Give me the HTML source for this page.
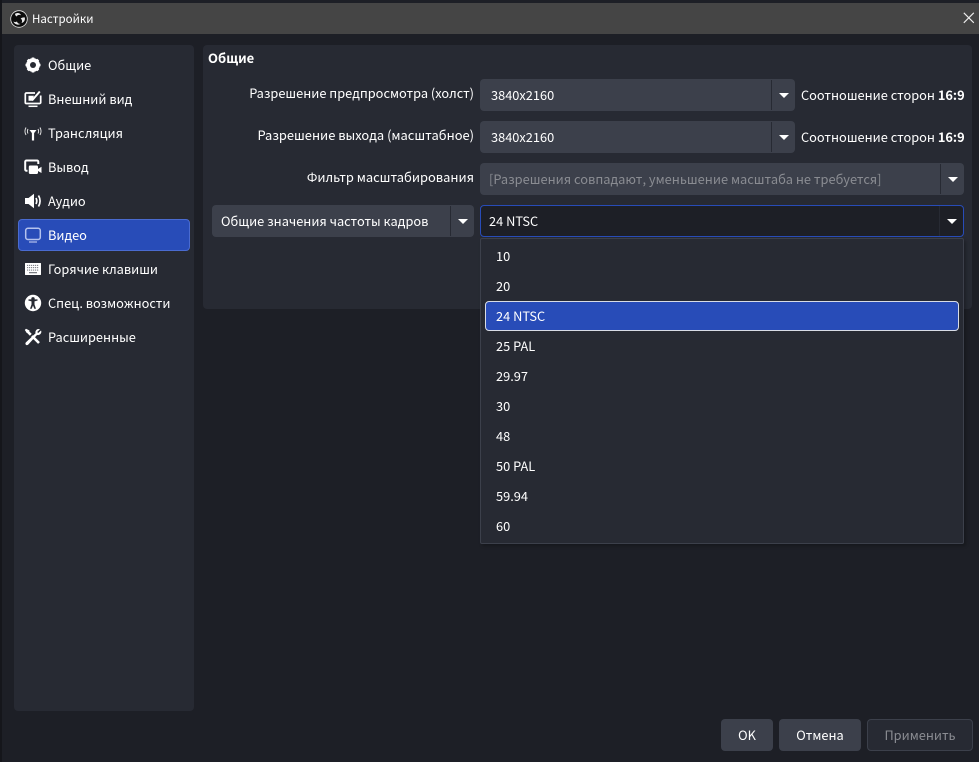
<!DOCTYPE html>
<html><head><meta charset="utf-8"><style>
*{box-sizing:border-box}
html,body{margin:0;padding:0}
body{width:979px;height:762px;overflow:hidden;background:#1d1f26;position:relative;font-family:"Noto Sans CJK SC","DejaVu Sans",sans-serif;font-size:12.8px;color:#fff}
.a{position:absolute}
.t{position:absolute;white-space:nowrap;line-height:18px;height:18px}
.panel{position:absolute;background:#272a33;border-radius:4px}
.c{position:absolute;height:32px;background:#3c404b;border-radius:4px}
.c .s{position:absolute;right:23px;top:1px;bottom:1px;width:1px;background:#272a33}
.c .r{position:absolute;right:6px;top:14px;width:0;height:0;border-left:5px solid transparent;border-right:5px solid transparent;border-top:5px solid #fff}
.ic{position:absolute;left:24px;width:18px;height:18px;overflow:visible}
.b{position:absolute;top:719px;height:32px;background:#3c404b;border-radius:4px;text-align:center;line-height:32px}
</style></head><body>
<div class="a" style="left:0;top:0;width:2px;height:762px;background:#15161b"></div>
<div class="a" style="left:2px;top:3px;width:977px;height:31px;background:#454545"></div>
<svg class="a" style="left:10px;top:10px" width="18" height="18" viewBox="0 0 18 18"><circle cx="9" cy="9" r="8.300" fill="#0c0c0c" stroke="#e8e8e8" stroke-width=".8"/><path d="M5 3.800c2.600-1.500 5.400-.8 6 1.500-1.700-.8-3.600-.4-4.300 1.200C5.700 6.100 5 5 5 3.800zM14.800 7.500c.6 2.800-.9 5-3.300 5.500 1-1.600.7-3.500-.9-4.500C12 7.700 13.500 7.200 14.800 7.500zM3.400 11.500c1.100.7 2.400.8 3.600 0 .3 1.700 1.900 2.600 3.600 2.400-2.700 1.600-5.900.5-7.200-2.400z" fill="#e8e8e8"/></svg>
<div class="t" style="left:32px;top:10px;font-size:11.500px">Настройки</div>
<svg class="a" style="left:963px;top:12px" width="12" height="12" viewBox="0 0 12 12"><path d="M.8.800l10 10M10.800.800l-10 10" stroke="#eee" stroke-width="1.100"/></svg>

<div class="panel" style="left:14px;top:45px;width:180px;height:666px"></div>
<div class="a" style="left:18px;top:219px;width:172px;height:32px;background:#284cb8;border:1px solid #4a6bd0;border-radius:4px"></div>

<svg class="ic" style="top:56px" viewBox="0 0 18 18"><circle cx="9" cy="9" r="5" fill="none" stroke="#fff" stroke-width="3.800"/><path d="M9 1.500v15M1.500 9h15M3.700 3.700l10.600 10.600M14.300 3.700L3.700 14.300" stroke="#fff" stroke-width="2.600"/><circle cx="9" cy="9" r="3" fill="#272a33"/></svg>
<svg class="ic" style="top:90px" viewBox="0 0 18 18"><path d="M11 3H2.300a1 1 0 0 0-1 1v8.500a1 1 0 0 0 1 1h13.400a1 1 0 0 0 1-1V5.500" fill="none" stroke="#fff" stroke-width="1.700"/><path d="M4.500 5.800h5.500L8 10.800H4.500z" fill="#fff"/><path d="M8 10.500L15.800 1.500" stroke="#fff" stroke-width="2"/><path d="M4.500 16.300h9" stroke="#fff" stroke-width="1.500"/></svg>
<svg class="ic" style="top:124px" viewBox="0 0 18 18"><path d="M9 7v9.500" stroke="#fff" stroke-width="2.200"/><path d="M5.500 6h7L9 10.500z" fill="#fff"/><path d="M4 5C3.200 6.500 3.200 8 4 9.500M14 5c.8 1.500.8 3 0 4.500M2 3.500C.6 6 .6 8.500 2 11M16 3.500c1.400 2.500 1.400 5 0 7.500" fill="none" stroke="#e4e4e4" stroke-width="1"/></svg>
<svg class="ic" style="top:158px" viewBox="0 0 18 18"><path d="M3.500 12.800H2.500A1.300 1.300 0 0 1 1.200 11.500V3.800a1.300 1.300 0 0 1 1.300-1.300H13a1.300 1.300 0 0 1 1.300 1.300V6" fill="none" stroke="#fff" stroke-width="2"/><rect x="4.800" y="7.500" width="9.200" height="8.500" rx="1.200" fill="#fff"/><path d="M14 11l3.500-2.200v6.200L14 13z" fill="#fff"/></svg>
<svg class="ic" style="top:192px" viewBox="0 0 18 18"><path d="M1 6h3.500L10 1.800v14.400L4.500 12H1z" fill="#fff"/><path d="M12 6c1 1.900 1 4 0 6M14.500 3.500c2 3.500 2 7.500 0 11" fill="none" stroke="#fff" stroke-width="1.700"/></svg>
<svg class="ic" style="top:226px" viewBox="0 0 18 18"><rect x="1.700" y="2.200" width="14.600" height="11.300" rx="2.200" fill="none" stroke="#b4c2ee" stroke-width="1.500"/><path d="M5 16h8" stroke="#b4c2ee" stroke-width="1.200"/></svg>
<svg class="ic" style="top:260px" viewBox="0 0 18 18"><rect x="1" y="3" width="16" height="12" rx=".5" fill="#fff"/><path d="M3 5.300h12M3 7.700h12M3 10.100h12" stroke="#5a5d66" stroke-width=".9" stroke-dasharray="1.200 .8"/><path d="M5 12.700h8" stroke="#5a5d66" stroke-width="1"/></svg>
<svg class="ic" style="top:294px" viewBox="0 0 18 18"><circle cx="9" cy="9" r="8.200" fill="#fff"/><circle cx="9" cy="4.800" r="1.700" fill="#272a33"/><path d="M4.300 6.500l3.200.9v3.100L6 14.700h1.700L9 11.500l1.300 3.200H12l-1.500-4.200V7.400l3.200-.9-.3-1.100H4.600z" fill="#272a33"/></svg>
<svg class="ic" style="top:328px" viewBox="0 0 18 18"><path d="M2.800 2.800l4 4M8 8l7 7" stroke="#fff" stroke-width="2.600"/><path d="M2 .8L.8 2l2 3 2.200-.5.500-2z" fill="#fff"/><path d="M17 2.500l-2.800 2.500-1-1L16 1.300C14 .5 12 1.500 11.500 3.500c-.2.700-.1 1.300.1 1.800L2 14.300c-.8.800-.8 1.700-.1 2.400s1.600.6 2.300-.1L13 7c2 .4 4-.8 4.300-2.800.1-.6 0-1.200-.3-1.700z" fill="#fff"/></svg>

<div class="t" style="left:48px;top:56px">Общие</div>
<div class="t" style="left:48px;top:90px">Внешний вид</div>
<div class="t" style="left:48px;top:124px">Трансляция</div>
<div class="t" style="left:48px;top:158px">Вывод</div>
<div class="t" style="left:48px;top:192px">Аудио</div>
<div class="t" style="left:48px;top:226px">Видео</div>
<div class="t" style="left:48px;top:260px">Горячие клавиши</div>
<div class="t" style="left:48px;top:294px">Спец. возможности</div>
<div class="t" style="left:48px;top:328px">Расширенные</div>

<div class="panel" style="left:203px;top:45px;width:769px;height:264px"></div>
<div class="t" style="left:208px;top:49px;font-weight:700;font-size:13px">Общие</div>
<div class="t" style="right:505px;top:84px">Разрешение предпросмотра (холст)</div>
<div class="t" style="right:505px;top:126px;font-size:12.900px">Разрешение выхода (масштабное)</div>
<div class="t" style="right:505px;top:168px;font-size:12.900px">Фильтр масштабирования</div>

<div class="c" style="left:480px;top:79px;width:315px"><i class="s"></i><i class="r"></i></div>
<div class="t" style="left:491px;top:86px">3840x2160</div>
<div class="c" style="left:480px;top:121px;width:315px"><i class="s"></i><i class="r"></i></div>
<div class="t" style="left:491px;top:128px">3840x2160</div>
<div class="t" style="left:801px;top:86px">Соотношение сторон <b>16:9</b></div>
<div class="t" style="left:801px;top:128px">Соотношение сторон <b>16:9</b></div>
<div class="c" style="left:480px;top:163px;width:484px"><i class="s"></i><i class="r"></i></div>
<div class="t" style="left:489px;top:170px;color:#8a8c92;font-size:12.850px">[Разрешения совпадают, уменьшение масштаба не требуется]</div>
<div class="c" style="left:212px;top:205px;width:262px"><i class="s"></i><i class="r"></i></div>
<div class="t" style="left:221px;top:212px">Общие значения частоты кадров</div>
<div class="c" style="left:480px;top:205px;width:484px;background:#1d1f26;border:1px solid #284cb8"><i class="s" style="right:23px;top:0;bottom:0"></i><i class="r" style="right:6px;top:13px"></i></div>
<div class="t" style="left:489px;top:212px">24 NTSC</div>

<div class="a" style="left:480px;top:238px;width:484px;height:306px;background:#272a33;border:1px solid #3c404b;border-radius:2px;box-shadow:2px 2px 3px rgba(0,0,0,.25)"></div>
<div class="a" style="left:485px;top:301px;width:474px;height:30px;background:#284cb8;border:1px solid #d8dce6;border-radius:4px"></div>
<div class="t" style="left:496px;top:247px">10</div>
<div class="t" style="left:496px;top:277px">20</div>
<div class="t" style="left:496px;top:307px">24 NTSC</div>
<div class="t" style="left:496px;top:337px">25 PAL</div>
<div class="t" style="left:496px;top:367px">29.97</div>
<div class="t" style="left:496px;top:397px">30</div>
<div class="t" style="left:496px;top:427px">48</div>
<div class="t" style="left:496px;top:457px">50 PAL</div>
<div class="t" style="left:496px;top:487px">59.94</div>
<div class="t" style="left:496px;top:517px">60</div>

<div class="b" style="left:721px;width:52px">OK</div>
<div class="b" style="left:779px;width:82px">Отмена</div>
<div class="b" style="left:867px;width:106px;background:#272a33;border:1px solid #3c404b;line-height:30px;color:#8a8c92">Применить</div>
</body></html>
